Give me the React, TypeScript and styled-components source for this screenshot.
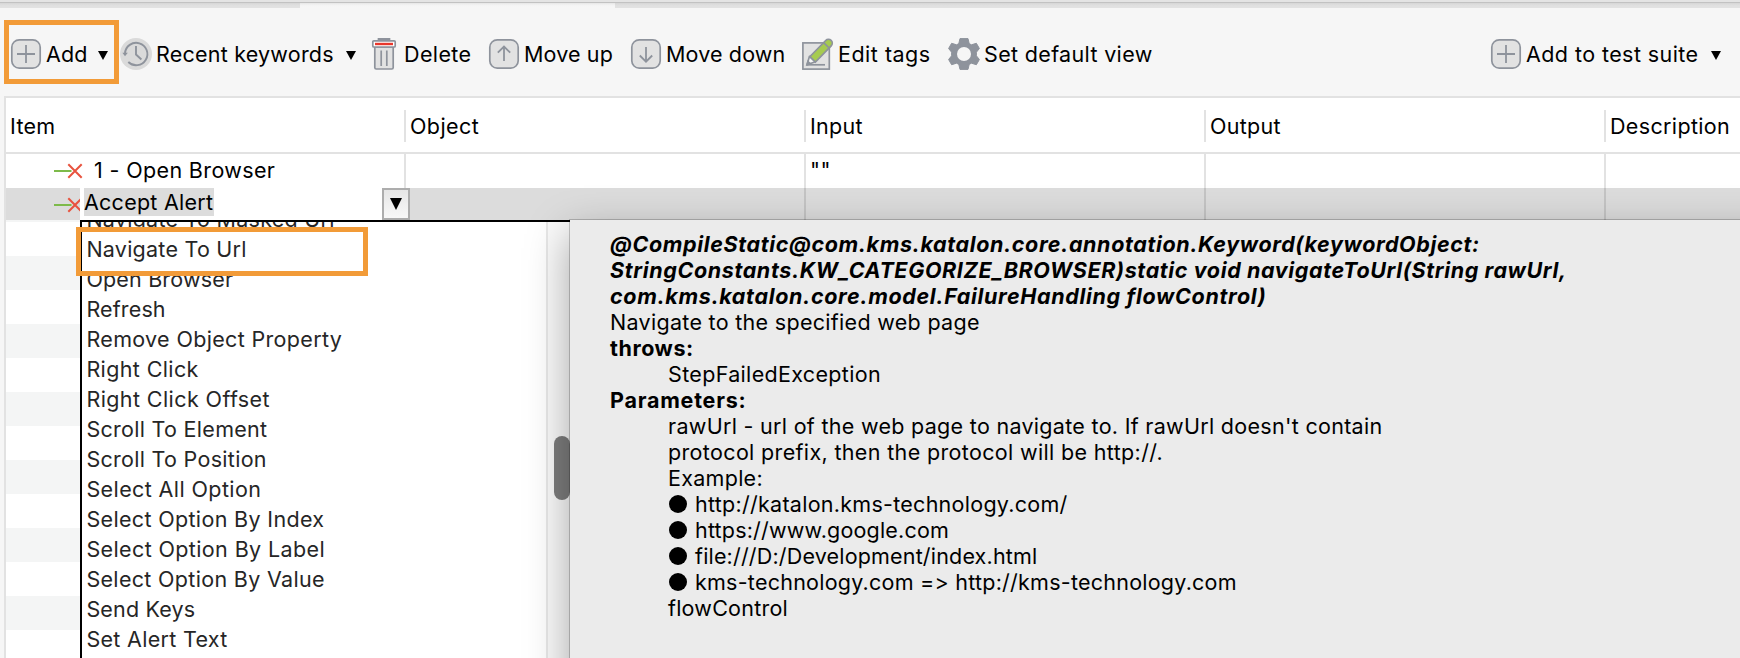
import React from 'react';
import styled, { createGlobalStyle, css } from 'styled-components';

const GlobalStyle = createGlobalStyle`
  *, *::before, *::after { box-sizing: border-box; }
  html, body { margin: 0; padding: 0; }
  body { overflow: hidden; background: #f6f6f6; }
`;

const grey = '#8e939c';
const line = '#e2e2e2';

const Window = styled.div`
  position: relative;
  display: flex;
  flex-direction: column;
  width: 1740px;
  height: 658px;
  overflow: hidden;
  background: #f6f6f6;
  color: #000;
  font-family: Inter, 'Liberation Sans', sans-serif;
  font-size: 21.5px;
  white-space: pre;
`;

const Label = styled.span<{ $track?: number }>`
  letter-spacing: ${(p) => p.$track ?? 0.28}px;
`;

/* ---------- tab strip ---------- */

const TabStrip = styled.div`
  display: flex;
  flex: none;
  height: 8px;
  border-top: 2px solid #e4e4e4;
`;

const TabEdge = styled.div<{ $width?: number; $active?: boolean }>`
  width: ${(p) => (p.$width ? `${p.$width}px` : 'auto')};
  flex: ${(p) => (p.$width ? 'none' : 1)};
  border-top: 1px solid #c2c2c2;
  background: ${(p) =>
    p.$active
      ? 'linear-gradient(#e6e6e6, #f3f3f3 2px, #f6f6f6 4px)'
      : 'linear-gradient(#d6d6d6, #dfdfdf 2px, #e3e3e3)'};
`;

/* ---------- toolbar ---------- */

const Toolbar = styled.div`
  display: flex;
  flex: none;
  align-items: center;
  height: 88px;
  padding: 4px 0 0 10px;
`;

const ToolItem = styled.div<{ $width: number; $end?: boolean }>`
  display: flex;
  flex: none;
  align-items: center;
  gap: 4px;
  width: ${(p) => p.$width}px;
  height: 32px;
  ${(p) => p.$end && css`margin-left: auto;`}

  svg { flex: none; display: block; }
`;

const Caret = styled.i<{ $gap?: number }>`
  width: 0;
  height: 0;
  margin: 3px 0 0 ${(p) => p.$gap ?? 0}px;
  border: 5px solid transparent;
  border-top: 9px solid #000;
  border-bottom: 0;
`;

/* ---------- table ---------- */

const Table = styled.div`
  display: flex;
  flex-direction: column;
  flex: 1;
  margin-left: 4px;
  border: solid ${line};
  border-width: 2px 0 0 2px;
  background: #fff;
`;

const columns = css`
  display: grid;
  grid-template-columns: 400px 400px 400px 400px 1fr;
`;

const HeaderRow = styled.div`
  ${columns}
  flex: none;
  align-items: center;
  height: 56px;
  border-bottom: 2px solid ${line};
`;

const HeaderCell = styled.div`
  height: 32px;
  margin-top: 2px;
  padding-left: 4px;
  border-right: 2px solid ${line};
  line-height: 32px;

  &:last-child { border-right: 0; }
`;

const Row = styled.div<{ $selected?: boolean }>`
  ${columns}
  flex: none;
  height: ${(p) => (p.$selected ? 32 : 34)}px;
  line-height: 32px;
  background: ${(p) => (p.$selected ? '#dcdcdc' : '#fff')};
  --rule: ${(p) => (p.$selected ? '#c4c4c4' : line)};
`;

const Cell = styled.div`
  display: flex;
  padding-left: 4px;
  border-right: 2px solid var(--rule);

  &:last-child { border-right: 0; }
`;

const ItemCell = styled(Cell)`
  padding-left: 48px;
`;

const StepIcon = styled.svg<{ $clip?: boolean }>`
  flex: none;
  width: ${(p) => (p.$clip ? 26 : 40)}px;
  height: 34px;
`;

const Editor = styled.div`
  display: flex;
  flex: 1;
  align-items: flex-start;
  justify-content: space-between;
  margin-right: -6px;
  padding-left: 4px;
  background: #fff;
  position: relative;
`;

const Selection = styled.span`
  height: 28px;
  line-height: 28px;
  width: 130px;
  background: #dcdcdc;
`;

const DropButton = styled.span`
  display: flex;
  align-items: center;
  justify-content: center;
  width: 28px;
  height: 32px;
  border: 2px solid #adadad;
  background: linear-gradient(#e6e6e6, #f8f8f8);

  i {
    border: 6px solid transparent;
    border-top: 12px solid #000;
    border-bottom: 0;
    margin-bottom: 1px;
  }
`;

const Stripes = styled.div`
  flex: 1;
  background: repeating-linear-gradient(#f4f5f5 0 2px, #fff 2px 36px, #f4f5f5 36px 68px);
`;

/* ---------- keyword list ---------- */

const KeywordPopup = styled.div`
  position: absolute;
  left: 80px;
  top: 220px;
  display: flex;
  width: 490px;
  height: 438px;
  border: solid #000;
  border-width: 2px 0 0 2px;
  background: #fff;
  overflow: hidden;
`;

const KeywordList = styled.div`
  flex: 1;
  margin-top: -18px;
  padding-left: 4.4px;
`;

const Keyword = styled.div`
  height: 30px;
  line-height: 30px;
  color: #262626;
`;

const ScrollTrack = styled.div`
  width: 24px;
  padding: 214px 0 0 6px;
  border-left: 2px solid #e8e8e8;
  background: #fafafa;
`;

const ScrollThumb = styled.div`
  width: 16px;
  height: 64px;
  border-radius: 8px;
  background: #7d7d7d;
`;

/* ---------- documentation popup ---------- */

const DocPopup = styled.div`
  position: absolute;
  left: 570px;
  top: 220px;
  width: 1240px;
  height: 520px;
  padding: 11px 0 0 40px;
  background: #ebebeb;
  box-shadow: 0 0 0 1px rgba(0, 0, 0, 0.2), 0 14px 40px rgba(0, 0, 0, 0.34);
  line-height: 26px;
`;

const DocLine = styled.div<{ $indent?: boolean; $bold?: boolean; $italic?: boolean }>`
  display: flex;
  align-items: center;
  height: 26px;
  padding-left: ${(p) => (p.$indent ? 58 : 0)}px;
  font-weight: ${(p) => (p.$bold ? 700 : 400)};
  font-style: ${(p) => (p.$italic ? 'italic' : 'normal')};
`;

const Bullet = styled.i`
  width: 18px;
  height: 18px;
  margin: 0 8px 0 1px;
  border-radius: 50%;
  background: #000;
`;

const Callout = styled.div<{ $x: number; $y: number; $w: number; $h: number }>`
  position: absolute;
  left: ${(p) => p.$x}px;
  top: ${(p) => p.$y}px;
  width: ${(p) => p.$w}px;
  height: ${(p) => p.$h}px;
  border: 5px solid #f29b38;
`;

/* ---------- icons ---------- */

const BoxIcon = ({ d }: { d: string }) => (
  <svg width="32" height="32" viewBox="0 0 32 32" fill="none" stroke={grey}>
    <rect x="1.8" y="1.8" width="28.4" height="28.4" rx="7.5" fill="#e2e2e2" strokeWidth="1.7" />
    <path d={d} strokeWidth="1.8" />
  </svg>
);

const plus = 'M16 7v18M7 16h18';
const up = 'M16 23V8.5M9.8 14.7 16 8.5l6.2 6.2';
const down = 'M16 9v14.5M9.8 17.5l6.2 6.2 6.2-6.2';

const ClockIcon = () => (
  <svg width="32" height="32" viewBox="0 0 32 32" fill="none" stroke={grey} strokeWidth="1.9">
    <circle cx="16" cy="16" r="16" fill="#dadada" stroke="none" />
    <path d="M5 15.5A11.2 11.2 0 1 1 8.3 24" />
    <path d="M16 8v8.5l5.4 5" />
    <path d="M2.4 14.8h5.4L5 18.200z" fill={grey} stroke="none" />
  </svg>
);

const TrashIcon = () => (
  <svg width="32" height="32" viewBox="0 0 32 32" fill="none" stroke={grey} strokeWidth="1.7">
    <path d="M10.5 2.5V.8h11v1.7" fill={grey} />
    <path d="M6.8 9h18.4v20.6q0 1.4-1.4 1.4H8.2q-1.4 0-1.4-1.4z" fill="#e2e2e2" />
    <rect x="4.8" y="2.8" width="22.4" height="6.2" rx="1" fill="#fff" />
    <path d="M7 6h18" stroke="#e8372c" strokeWidth="2.4" />
    <path d="M13.2 12.5v15.500M18.800 12.500v15.500" />
  </svg>
);

const EditIcon = () => (
  <svg width="32" height="32" viewBox="0 0 32 32" fill="none" stroke={grey} strokeWidth="1.7">
    <rect x="0.9" y="4.9" width="26.4" height="26.2" fill="#e2e2e2" />
    <path d="M5 26.800h18" />
    <path d="M5 26.800l2.500-8.500 5.800 5.500z" fill="#f6f6f6" strokeLinejoin="round" />
    <path d="M8 18.500 23.700 2.500a3.800 3.800 0 0 1 5.500 5.300L13.400 24z" fill="#a6cb50" />
    <path d="M21.600 4.600l5.600 5.400" />
    <path d="M5 26.800l1-3.300 2.400 2.300z" fill={grey} />
  </svg>
);

const GearIcon = () => (
  <svg width="32" height="32" viewBox="0 0 32 32">
    <path
      fill={grey}
      stroke={grey}
      strokeLinejoin="round"
      strokeWidth="1"
      d="M12 .6h8l1.200 5 2.200 1.200 5-1.500 3 5.200-3 3.700v3.600l3 3.700-3 5.200-5-1.500-2.200 1.200-1.200 5h-8l-1.200-5-2.200-1.200-5 1.500-3-5.200 3-3.700v-3.600l-3-3.700 3-5.200 5 1.500 2.200-1.200z"
    />
    <circle cx="16" cy="16" r="7" fill="#f6f6f6" />
  </svg>
);

const Step = ({ clip }: { clip?: boolean }) => (
  <StepIcon $clip={clip} viewBox={`0 0 ${clip ? 26 : 40} 34`} fill="none">
    <path d="M0 17h17.5" stroke="#7dba4a" strokeWidth="2" />
    <path d="M14.300 10.300l13.400 13.400M27.700 10.300l-13.400 13.400" stroke="#e8533f" strokeWidth="2" />
  </StepIcon>
);

/* ---------- data ---------- */

const headers: [string, number][] = [
  ['Item', 0.3],
  ['Object', 0.4],
  ['Input', 0.28],
  ['Output', 0.28],
  ['Description', 0.35],
];

const keywords: [string, number][] = [
  ['Navigate To Masked Url', 0.26],
  ['Navigate To Url', 0.24],
  ['Open Browser', 0.17],
  ['Refresh', 0.14],
  ['Remove Object Property', 0.34],
  ['Right Click', 0.38],
  ['Right Click Offset', 0.41],
  ['Scroll To Element', 0.29],
  ['Scroll To Position', 0.29],
  ['Select All Option', 0.4],
  ['Select Option By Index', 0.34],
  ['Select Option By Label', 0.38],
  ['Select Option By Value', 0.32],
  ['Send Keys', 0.16],
  ['Set Alert Text', 0.3],
];

const signature: [string, number][] = [
  ['@CompileStatic@com.kms.katalon.core.annotation.Keyword(keywordObject:', 0.63],
  ['StringConstants.KW_CATEGORIZE_BROWSER)static void navigateToUrl(String rawUrl,', 0.618],
  ['com.kms.katalon.core.model.FailureHandling flowControl)', 0.66],
];

const examples: [string, number][] = [
  ['http://katalon.kms-technology.com/', 0.27],
  ['https://www.google.com', 0.185],
  ['file:///D:/Development/index.html', 0.176],
  ['kms-technology.com => http://kms-technology.com', 0.24],
];

export default function App() {
  return (
    <Window>
      <GlobalStyle />
      <TabStrip>
        <TabEdge $width={300} />
        <TabEdge $width={315} $active />
        <TabEdge />
      </TabStrip>

      <Toolbar>
        <ToolItem $width={110}>
          <BoxIcon d={plus} />
          <Label $track={0.15}>Add</Label>
          <Caret $gap={6} />
        </ToolItem>
        <ToolItem $width={248}>
          <ClockIcon />
          <Label $track={0.22}>Recent keywords</Label>
          <Caret $gap={8} />
        </ToolItem>
        <ToolItem $width={120}>
          <TrashIcon />
          <Label $track={0.38}>Delete</Label>
        </ToolItem>
        <ToolItem $width={142}>
          <BoxIcon d={up} />
          <Label $track={0.14}>Move up</Label>
        </ToolItem>
        <ToolItem $width={172}>
          <BoxIcon d={down} />
          <Label $track={0.14}>Move down</Label>
        </ToolItem>
        <ToolItem $width={146}>
          <EditIcon />
          <Label $track={0.5}>Edit tags</Label>
        </ToolItem>
        <ToolItem $width={210}>
          <GearIcon />
          <Label $track={0.34}>Set default view</Label>
        </ToolItem>
        <ToolItem $width={250} $end>
          <BoxIcon d={plus} />
          <Label $track={0.42}>Add to test suite</Label>
          <Caret $gap={8} />
        </ToolItem>
      </Toolbar>

      <Table>
        <HeaderRow>
          {headers.map(([name, track]) => (
            <HeaderCell key={name}>
              <Label $track={track}>{name}</Label>
            </HeaderCell>
          ))}
        </HeaderRow>
        <Row>
          <ItemCell>
            <Step />
            <Label $track={0.36}>1 - Open Browser</Label>
          </ItemCell>
          <Cell />
          <Cell>
            <Label $track={0.6}>""</Label>
          </Cell>
          <Cell />
          <Cell />
        </Row>
        <Row $selected>
          <ItemCell>
            <Step clip />
            <Editor>
              <Selection>
                <Label $track={0.25}>Accept Alert</Label>
              </Selection>
              <DropButton>
                <i />
              </DropButton>
            </Editor>
          </ItemCell>
          <Cell />
          <Cell />
          <Cell />
          <Cell />
        </Row>
        <Stripes />
      </Table>

      <KeywordPopup>
        <KeywordList>
          {keywords.map(([name, track]) => (
            <Keyword key={name}>
              <Label $track={track}>{name}</Label>
            </Keyword>
          ))}
        </KeywordList>
        <ScrollTrack>
          <ScrollThumb />
        </ScrollTrack>
      </KeywordPopup>

      <DocPopup>
        {signature.map(([text, track]) => (
          <DocLine key={text} $bold $italic>
            <Label $track={track}>{text}</Label>
          </DocLine>
        ))}
        <DocLine>
          <Label $track={0.3}>Navigate to the specified web page</Label>
        </DocLine>
        <DocLine $bold>
          <Label $track={0.54}>throws:</Label>
        </DocLine>
        <DocLine $indent>
          <Label $track={0.335}>StepFailedException</Label>
        </DocLine>
        <DocLine $bold>
          <Label $track={0.77}>Parameters:</Label>
        </DocLine>
        <DocLine $indent>
          <Label $track={0.297}>rawUrl - url of the web page to navigate to. If rawUrl doesn't contain</Label>
        </DocLine>
        <DocLine $indent>
          <Label $track={0.348}>protocol prefix, then the protocol will be http://.</Label>
        </DocLine>
        <DocLine $indent>
          <Label>Example:</Label>
        </DocLine>
        {examples.map(([text, track]) => (
          <DocLine key={text} $indent>
            <Bullet />
            <Label $track={track}>{text}</Label>
          </DocLine>
        ))}
        <DocLine $indent>
          <Label $track={0.228}>flowControl</Label>
        </DocLine>
      </DocPopup>

      <Callout $x={4} $y={20} $w={115} $h={64} />
      <Callout $x={76} $y={227} $w={292} $h={49} />
    </Window>
  );
}
